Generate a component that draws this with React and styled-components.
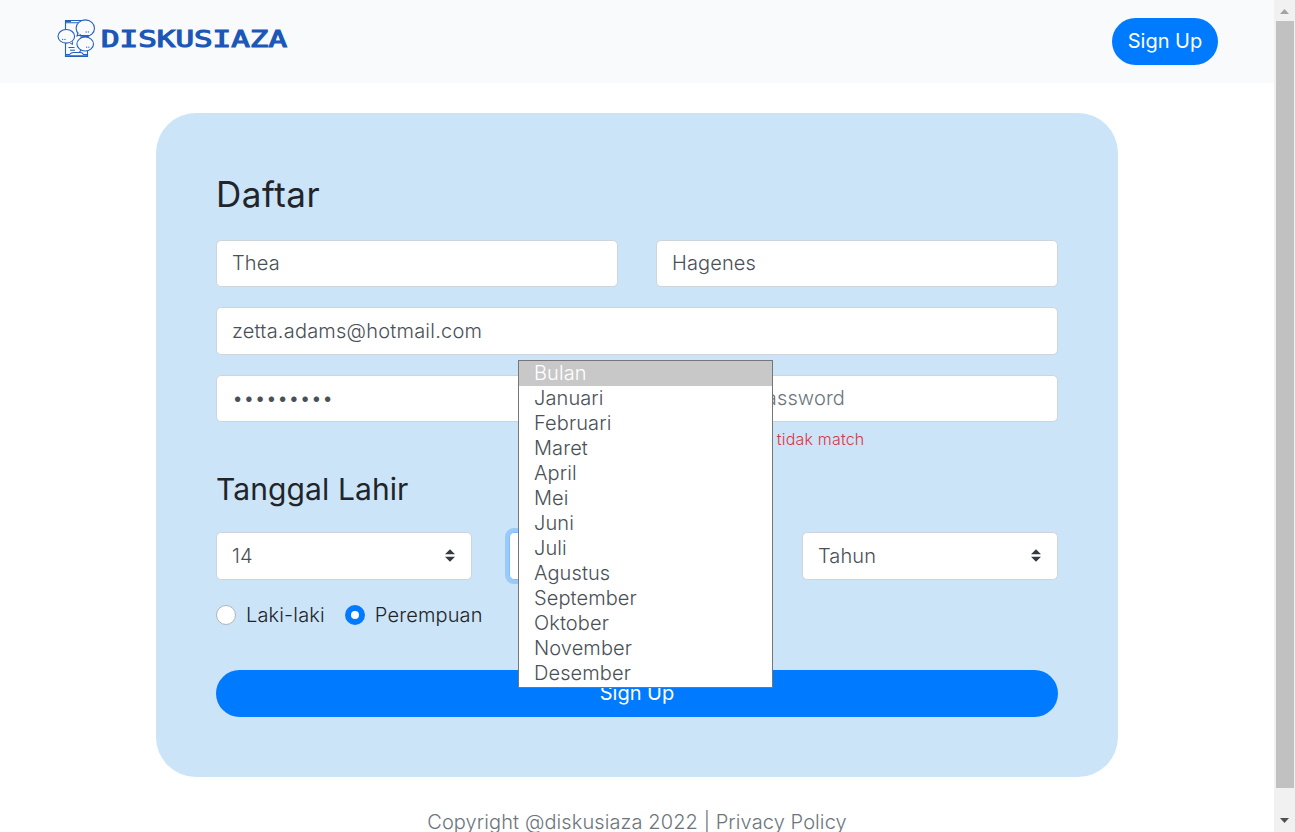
import React from "react";
import styled, { createGlobalStyle, css } from "styled-components";

const Global = createGlobalStyle`
  * { box-sizing: border-box; }
  html, body { margin: 0; overflow: hidden; background: #fff; }
  body { font: 300 20px/30px Inter, "Liberation Sans", sans-serif; color: #212529; letter-spacing: 0.1px; }
  button, input { font: inherit; }
`;

const Window = styled.div`
  position: relative;
  display: flex;
  height: 832px;
  overflow: hidden;
`;
const Page = styled.div`
  flex: 1;
  display: flex;
  flex-direction: column;
  overflow: hidden;
`;
const Navbar = styled.header`
  flex: none;
  height: 83px;
  padding: 0 56px 0 57px;
  display: flex;
  align-items: center;
  justify-content: space-between;
  background: #f8fafc;
`;
const Logo = styled.svg`
  display: block;
  width: 232px;
  height: 42px;
  margin-bottom: 6px;
`;
const Wordmark = styled.text`
  font: 400 23px "DejaVu Sans Mono";
  letter-spacing: 0;
  fill: #1a57b7;
  stroke: #1a57b7;
  stroke-width: 1.1px;
`;
const Button = styled.button`
  display: block;
  flex: none;
  width: ${(p) => (p.$block ? "100%" : "106px")};
  height: 47px;
  padding: 0;
  border: 0;
  border-radius: 24px;
  background: #007bff;
  color: #fff;
  font-weight: 400;
  line-height: 46px;
  padding-bottom: 2px;
`;
const Card = styled.form`
  flex: none;
  width: 962px;
  height: 664px;
  margin: 30px auto 0;
  padding: 60px;
  border-radius: 40px;
  background: #cce4f7;
`;
const Title = styled.h3`
  margin: 0 0 24.6px;
  font-size: 35px;
  font-weight: 400;
  line-height: 42px;
  letter-spacing: 0.5px;
`;
const Subtitle = styled.h4`
  margin: 20.4px 0 24.6px;
  font-size: 30px;
  font-weight: 400;
  line-height: 36px;
`;
const Row = styled.div`
  display: flex;
  gap: ${(p) => p.$gap ?? 38}px;
  margin-bottom: ${(p) => p.$space ?? 20}px;
`;
const Field = styled.div`
  flex: 1;
  min-width: 0;
`;
const control = css`
  display: flex;
  width: 100%;
  height: 47.5px;
  padding: 0 15px;
  border: 1px solid #ced4da;
  border-radius: 5px;
  background: #fff;
  color: #495057;
`;
const Input = styled.input`
  ${control}
  padding-bottom: ${(p) => (p.type === "email" ? 0 : 1)}px;
  outline: 0;
  letter-spacing: ${(p) => (p.type === "password" ? 0 : p.type === "email" ? 0.22 : 0.12)}px;
  &::placeholder { color: #6c757d; opacity: 1; }
`;
const SelectBox = styled.div`
  ${control}
  flex: 1;
  align-items: center;
  justify-content: space-between;
  ${(p) => p.$focused && css`
    border-color: #80bdff;
    box-shadow: 0 0 0 4px rgba(0, 123, 255, 0.25);
  `}
`;
const Arrows = styled.svg`
  width: 10px;
  height: 13px;
  margin-right: 1px;
  fill: #343a40;
`;
const ErrorText = styled.div`
  margin-top: 5px;
  font-size: 16px;
  line-height: 24px;
  letter-spacing: 0.18px;
  color: #dc3545;
`;
const Radios = styled.div`
  display: flex;
  gap: 20px;
  margin-bottom: 40.4px;
`;
const RadioLabel = styled.label`
  display: flex;
  align-items: center;
  gap: 10px;
  letter-spacing: 0.15px;
`;
const Dot = styled.span`
  width: 20px;
  height: 20px;
  border-radius: 50%;
  background: #fff;
  border: ${(p) => (p.$checked ? "6px solid #007bff" : "1px solid #adb5bd")};
`;
const Footer = styled.footer`
  margin-top: 30px;
  text-align: center;
  color: #6c757d;
`;
const Menu = styled.ul`
  position: absolute;
  left: 518px;
  top: 360px;
  width: 255px;
  height: 328px;
  margin: 0;
  padding: 0;
  list-style: none;
  border: 1px solid #767676;
  background: #fff;
`;
const Option = styled.li`
  height: 25px;
  padding-left: 15px;
  line-height: 25px;
  color: ${(p) => (p.$active ? "#fff" : "#495057")};
  background: ${(p) => (p.$active ? "#c8c8c8" : "#fff")};
`;
const Scrollbar = styled.div`
  flex: none;
  width: 21px;
  padding: 0 1px 0 2px;
  display: flex;
  flex-direction: column;
  background: #f1f1f1;
`;
const ScrollArrow = styled.svg`
  display: block;
  width: 17px;
  height: 21px;
  fill: ${(p) => p.$color};
`;
const Thumb = styled.div`
  height: 767px;
  margin-bottom: 23px;
  background: #c1c1c1;
`;

const months = ["Bulan", "Januari", "Februari", "Maret", "April", "Mei", "Juni", "Juli", "Agustus", "September", "Oktober", "November", "Desember"];

const BrandLogo = () => (
  <Logo viewBox="0 0 232 42">
    <g fill="#f8fafc" stroke="#2460bd" strokeWidth="1.1">
      <path d="M8.5 2.5h22v36h-22z" />
      <path d="M8.5 4.8h22M8.5 36.5h4q1.5-2 4-2h7q2 0 3 2h4" fill="none" />
      <path d="M9 3.3h5M9 38.1h21" strokeWidth="1.6" />
      <ellipse cx="28.3" cy="10.2" rx="9.2" ry="8.3" />
      <path d="M21 15l-1 3 4-1.3M23 17.5h9M23 19h9" />
      <ellipse cx="28.2" cy="26" rx="8.3" ry="7" />
      <path d="M24 31.9l-1.5 2.4" />
      <ellipse cx="9.3" cy="18.3" rx="8.3" ry="6.8" />
      <path d="M12.5 24.5l3 2-.2-3M28.5 14h1.3m1 0h1.3M5 21.4h1.2m1.1 0h1.3M29 29.2h1.2m1 0h1.2M11.5 29.5h6M13 32.2h5" strokeWidth="1" />
    </g>
    <Wordmark x="44" y="28.6" textLength="186" lengthAdjust="spacingAndGlyphs">DISKUSIAZA</Wordmark>
  </Logo>
);

const Select = ({ value, focused }) => (
  <SelectBox $focused={focused}>
    {value}
    <Arrows viewBox="0 0 4 5"><path d="M2 0L0 2h4zm0 5L0 3h4z" /></Arrows>
  </SelectBox>
);

export default function App() {
  return (
    <Window>
      <Global />
      <Page>
        <Navbar>
          <BrandLogo />
          <Button type="button">Sign Up</Button>
        </Navbar>
        <Card>
          <Title>Daftar</Title>
          <Row>
            <Field><Input defaultValue="Thea" /></Field>
            <Field><Input defaultValue="Hagenes" /></Field>
          </Row>
          <Row><Field><Input type="email" defaultValue="zetta.adams@hotmail.com" /></Field></Row>
          <Row $space={0}>
            <Field><Input type="password" defaultValue="password1" /></Field>
            <Field>
              <Input placeholder="Confirm Password" />
              <ErrorText>Password anda tidak match</ErrorText>
            </Field>
          </Row>
          <Subtitle>Tanggal Lahir</Subtitle>
          <Row $gap={37}>
            <Select value="14" />
            <Select value="Bulan" focused />
            <Select value="Tahun" />
          </Row>
          <Radios>
            <RadioLabel><Dot />Laki-laki</RadioLabel>
            <RadioLabel><Dot $checked />Perempuan</RadioLabel>
          </Radios>
          <Button type="button" $block>Sign Up</Button>
        </Card>
        <Footer>Copyright @diskusiaza 2022 | Privacy Policy</Footer>
      </Page>
      <Scrollbar>
        <ScrollArrow $color="#a3a3a3" viewBox="0 0 17 21"><path d="M4 14l4.5-5 4.5 5z" /></ScrollArrow>
        <Thumb />
        <ScrollArrow $color="#505050" viewBox="0 0 17 21"><path d="M4 7l4.5 5 4.5-5z" /></ScrollArrow>
      </Scrollbar>
      <Menu>
        {months.map((m, i) => <Option key={m} $active={i === 0}>{m}</Option>)}
      </Menu>
    </Window>
  );
}
